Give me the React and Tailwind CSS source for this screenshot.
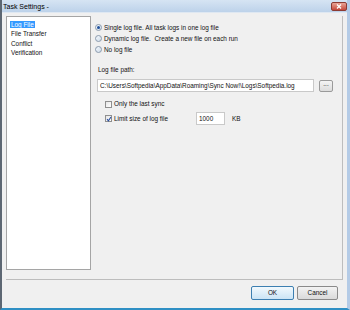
import React from "react";

function Radio({ checked }) {
  return (
    <span className="relative w-[7px] h-[7px] rounded-full border border-[#8a9aad] bg-gradient-to-br from-[#f4f8fc] to-[#cfdcea] flex items-center justify-center shrink-0">
      {checked && <span className="w-[3px] h-[3px] rounded-full bg-[#1e4f9a]" />}
    </span>
  );
}

function Check({ checked }) {
  return (
    <span className="relative w-[7px] h-[7px] border border-[#8f8f8f] bg-gradient-to-br from-[#e6e6e6] to-[#ffffff] flex items-center justify-center shrink-0">
      {checked && (
        <svg width="6" height="6" viewBox="0 0 6 6" className="absolute">
          <path d="M1 3.2 L2.4 4.8 L5 1" stroke="#2a4fa0" strokeWidth="1.1" fill="none" />
        </svg>
      )}
    </span>
  );
}

export default function App() {
  return (
    <div className="w-[350px] h-[310px] flex flex-col bg-[#f0f0f0] font-['Liberation_Sans',Arial,sans-serif] text-[6.4px] text-[#111] overflow-hidden border-l-2 border-l-[#5d6773] border-r-[3px] border-r-[#b4cbe6] border-b-2 border-b-[#2f8fc4]">
      {/* title bar */}
      <div className="h-[13px] flex items-center justify-between pl-[1px] bg-gradient-to-b from-[#d6e4f3] to-[#bdd2ea] border-b border-[#dfe8f2] shrink-0">
        <span className="text-[7px] leading-none text-black">Task Settings -</span>
        <span className="w-[16px] h-[9px] rounded-[2px] bg-gradient-to-b from-[#e8a497] to-[#c4463a] border border-[#8c3b33] flex items-center justify-center">
          <svg width="6" height="5" viewBox="0 0 6 5">
            <path d="M1 0.5 L5 4.5 M5 0.5 L1 4.5" stroke="white" strokeWidth="1.3" />
          </svg>
        </span>
      </div>

      <div className="flex-1 flex flex-col px-[4px] pt-[3px]">
        <div className="flex border-r border-b border-[#bdbdbd] h-[264px] shrink-0">
          {/* listbox */}
          <div className="w-[85px] h-[254px] bg-white border border-[#a5a5a5] pt-[3px] pl-[3px] flex flex-col">
            <div className="h-[9.5px] flex items-center">
              <span className="bg-[#3399ff] text-white px-[1px] leading-[7px]">Log File</span>
            </div>
            <div className="h-[9.5px] flex items-center pl-[1px]">File Transfer</div>
            <div className="h-[9.5px] flex items-center pl-[1px]">Conflict</div>
            <div className="h-[9.5px] flex items-center pl-[1px]">Verification</div>
          </div>

          {/* right panel */}
          <div className="flex-1 flex flex-col pl-[4px] pt-[6px]">
            <div className="h-[11px] flex items-center gap-[2px]">
              <Radio checked />
              <span>Single log file. All task logs in one log file</span>
            </div>
            <div className="h-[11px] flex items-center gap-[2px]">
              <Radio />
              <span>Dynamic log file.&nbsp; Create a new file on each run</span>
            </div>
            <div className="h-[11px] flex items-center gap-[2px]">
              <Radio />
              <span>No log file</span>
            </div>
            <div className="h-[8px] mt-[11px] flex items-center pl-[3px]">Log file path:</div>
            <div className="flex items-center mt-[5px] pl-[2px]">
              <div className="w-[217px] h-[13px] bg-white border border-[#c9c9c9] flex items-center pl-[2px] whitespace-nowrap overflow-hidden">
                C:\Users\Softpedia\AppData\Roaming\Sync Now!\Logs\Softpedia.log
              </div>
              <div className="ml-[5px] w-[14px] h-[12px] border border-[#9a9a9a] rounded-[2px] bg-gradient-to-b from-[#f4f4f4] to-[#dcdcdc] flex items-center justify-center leading-none pb-[2px]">
                ...
              </div>
            </div>
            <div className="h-[10px] mt-[7px] flex items-center pl-[10px] gap-[2px]">
              <Check />
              <span>Only the last sync</span>
            </div>
            <div className="h-[13px] mt-[3px] flex items-center pl-[10px]">
              <Check checked />
              <span className="ml-[2px] w-[82px]">Limit size of log file</span>
              <div className="w-[29px] h-[13px] bg-white border border-[#c9c9c9] flex items-center pl-[2px]">1000</div>
              <span className="ml-[7px]">KB</span>
            </div>
          </div>
        </div>

        {/* buttons */}
        <div className="flex justify-end gap-[3px] mt-[6px] pr-[5px]">
          <div className="w-[43px] h-[14px] rounded-[2px] border border-[#3c7fb1] bg-gradient-to-b from-[#f2f9fd] to-[#cbe4f5] flex items-center justify-center">OK</div>
          <div className="w-[41px] h-[14px] rounded-[2px] border border-[#8a8a8a] bg-gradient-to-b from-[#f3f3f3] to-[#dadada] flex items-center justify-center">Cancel</div>
        </div>
      </div>
    </div>
  );
}
